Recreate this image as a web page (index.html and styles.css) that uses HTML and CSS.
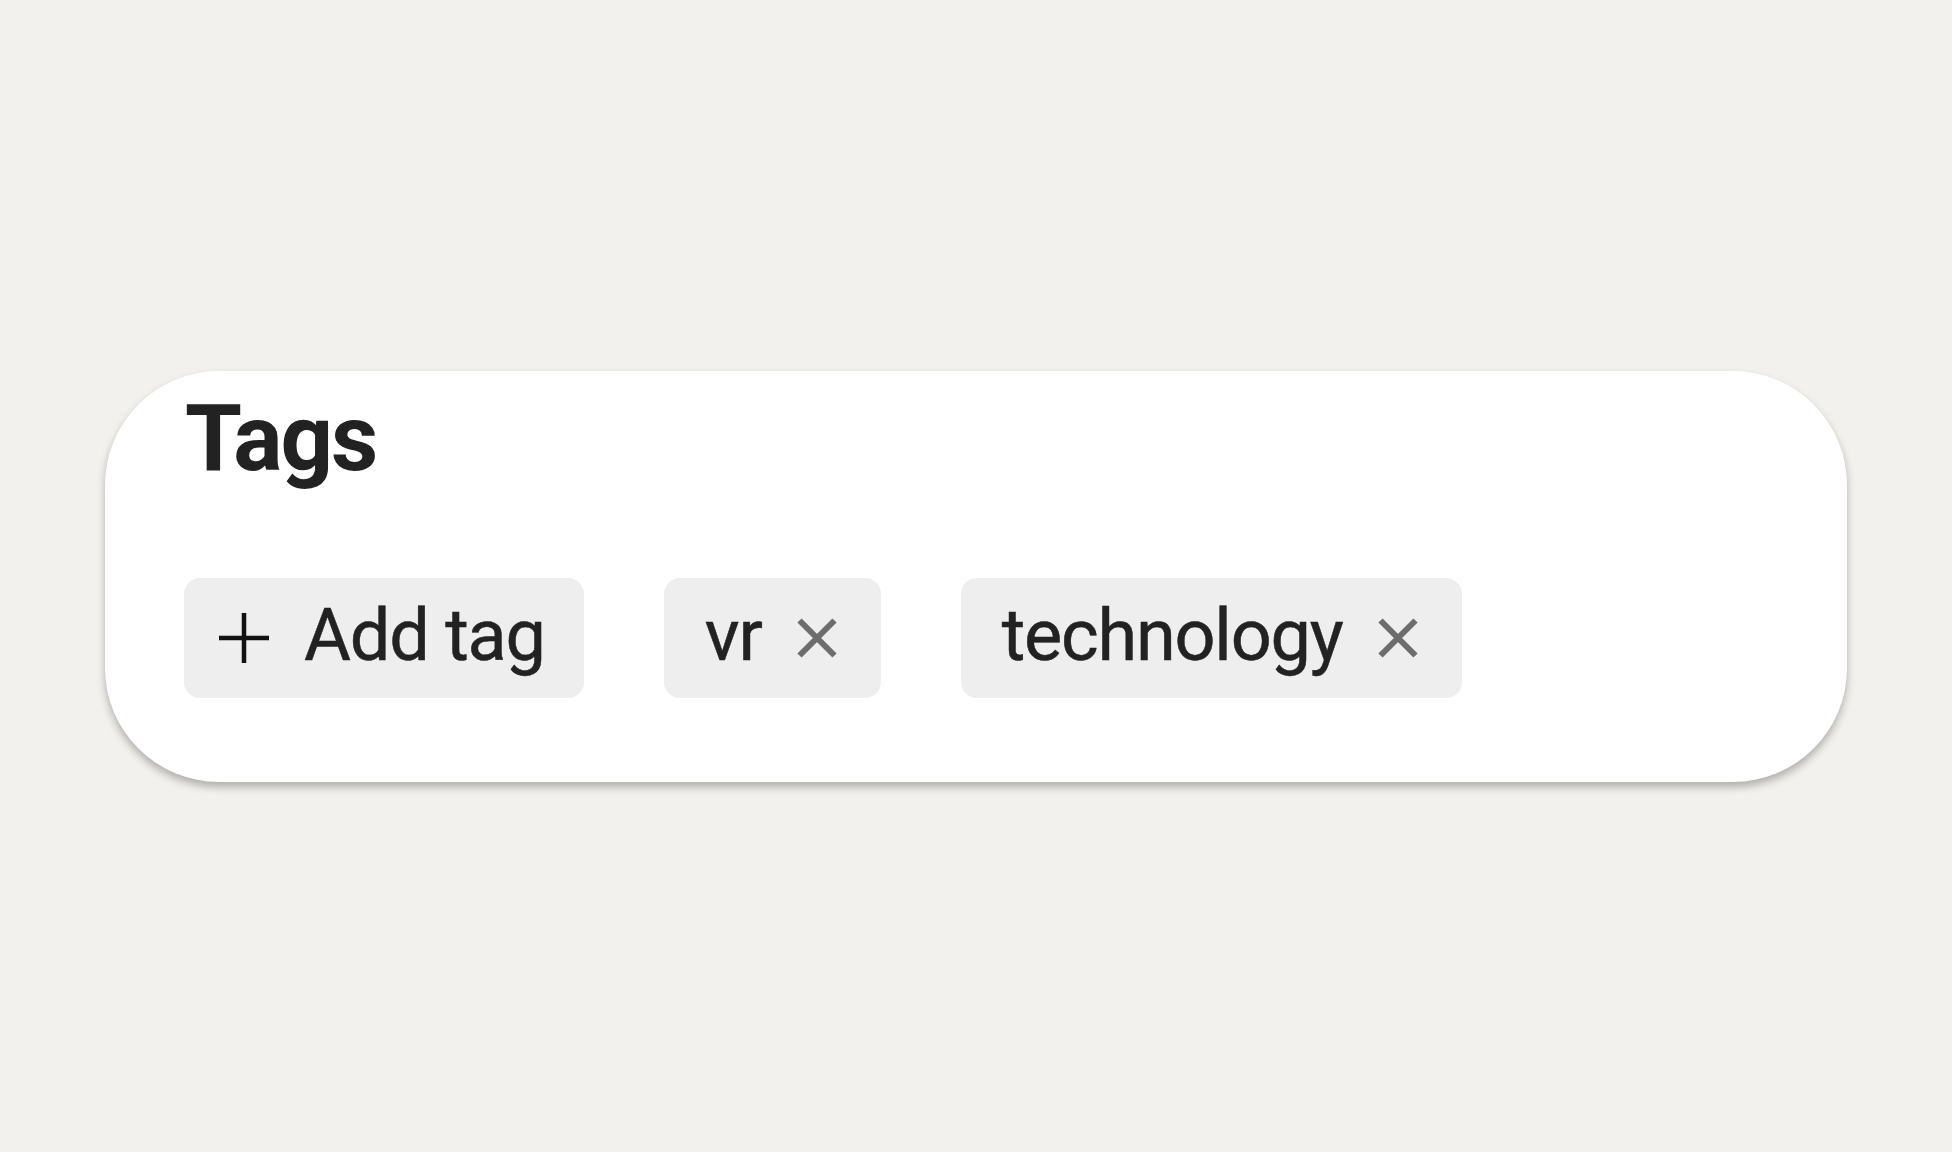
FILE: index.html
```html
<!DOCTYPE html>
<html lang="en">
<head>
<meta charset="utf-8">
<title>Tags</title>
<link rel="stylesheet" href="styles.css">
</head>
<body>
  <section class="card">
    <h2 class="title">Tags</h2>
    <div class="tags">
      <button class="chip chip-add" type="button">
        <svg class="plus" width="50" height="50" viewBox="0 0 50 50" aria-hidden="true">
          <path d="M25 0V50M0 25H50" stroke="#111" stroke-width="4.5" fill="none"/>
        </svg>
        <span class="chip-label">Add tag</span>
      </button>
      <span class="chip">
        <span class="chip-label">vr</span>
        <svg class="close" width="40" height="40" viewBox="0 0 40 40" aria-hidden="true">
          <path d="M2.5 2.5L37.5 37.5M37.5 2.5L2.5 37.5" stroke="#6d6d6d" stroke-width="6" fill="none"/>
        </svg>
      </span>
      <span class="chip">
        <span class="chip-label">technology</span>
        <svg class="close" width="40" height="40" viewBox="0 0 40 40" aria-hidden="true">
          <path d="M2.5 2.5L37.5 37.5M37.5 2.5L2.5 37.5" stroke="#6d6d6d" stroke-width="6" fill="none"/>
        </svg>
      </span>
    </div>
  </section>
</body>
</html>
```

FILE: styles.css
```css
html, body {
  margin: 0;
  padding: 0;
}

body {
  background: #f2f1ed;
  width: 1952px;
  height: 1152px;
  display: flex;
  align-items: center;
  justify-content: center;
  font-family: Roboto, "Liberation Sans", sans-serif;
  color: #222222;
}

.card {
  box-sizing: border-box;
  width: 1742px;
  background: #ffffff;
  border-radius: 114px;
  padding: 14px 79px 84px 79px;
  box-shadow: 0 5px 8px rgba(0, 0, 0, 0.28);
}

.title {
  margin: 0;
  font-size: 92px;
  font-weight: 700;
  line-height: normal;
  letter-spacing: -2px;
  color: #222222;
  padding-left: 1px;
}

.tags {
  margin-top: 86px;
  display: flex;
  gap: 80px;
}

.chip {
  box-sizing: border-box;
  height: 120px;
  display: flex;
  align-items: center;
  gap: 35px;
  padding: 0 44px 0 41px;
  background: #eeeeee;
  border-radius: 16px;
  border: 0;
  font-family: inherit;
  font-size: 72px;
  color: #222222;
}

.chip-add {
  padding: 0 39px 0 35px;
  gap: 35px;
}

.chip-label {
  line-height: normal;
  letter-spacing: -1.2px;
  -webkit-text-stroke: 0.5px #222222;
  position: relative;
  top: -2px;
}

.plus, .close {
  flex: none;
  display: block;
}
```
